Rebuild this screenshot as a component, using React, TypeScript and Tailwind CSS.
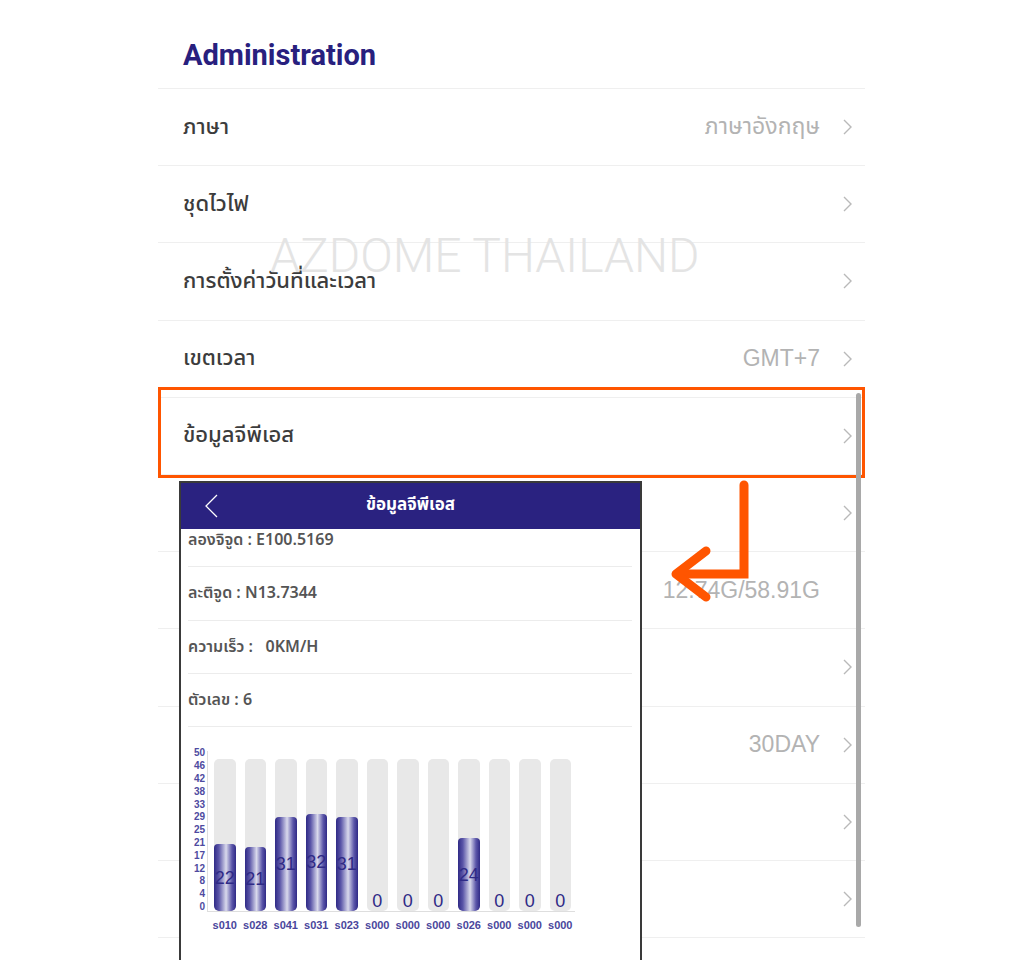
import React from "react";

const THAI = { fontFamily: '"Noto Sans Thai", "Noto Sans", "Liberation Sans", "DejaVu Sans", sans-serif' };
const LATIN = { fontFamily: '"Liberation Sans", Arial, sans-serif' };

type Row = { label: string; value?: string; chevron?: boolean };

const rows: Row[] = [
  { label: "ภาษา", value: "ภาษาอังกฤษ", chevron: true },
  { label: "ชุดไวไฟ", chevron: true },
  { label: "การตั้งค่าวันที่และเวลา", chevron: true },
  { label: "เขตเวลา", value: "GMT+7", chevron: true },
  { label: "ข้อมูลจีพีเอส", chevron: true },
  { label: "ฟอร์แมตการ์ด", chevron: true },
  { label: "พื้นที่จัดเก็บ", value: "12.74G/58.91G", chevron: false },
  { label: "เวอร์ชัน", chevron: true },
  { label: "ลบไฟล์อัตโนมัติ", value: "30DAY", chevron: true },
  { label: "รีเซ็ต", chevron: true },
  { label: "เกี่ยวกับ", chevron: true },
];

const satellites = [
  { id: "s010", snr: 22 },
  { id: "s028", snr: 21 },
  { id: "s041", snr: 31 },
  { id: "s031", snr: 32 },
  { id: "s023", snr: 31 },
  { id: "s000", snr: 0 },
  { id: "s000", snr: 0 },
  { id: "s000", snr: 0 },
  { id: "s026", snr: 24 },
  { id: "s000", snr: 0 },
  { id: "s000", snr: 0 },
  { id: "s000", snr: 0 },
];

const yTicks = ["50", "46", "42", "38", "33", "29", "25", "21", "17", "12", "8", "4", "0"];

const BAR_H = 152;

function Chevron({ hidden }: { hidden?: boolean }) {
  return (
    <svg
      width="9"
      height="16"
      viewBox="0 0 9 16"
      className={hidden ? "invisible" : ""}
    >
      <polyline points="1,1 8,8 1,15" fill="none" stroke="#b9b9b9" strokeWidth="1.4" />
    </svg>
  );
}

function SettingRow({ row }: { row: Row }) {
  const latinValue = row.value && /^[\x00-\x7f]+$/.test(row.value);
  return (
    <div className="flex h-[77.2px] items-center justify-between border-b border-[#efefef] pl-[25px] pr-[13px]">
      <span className="text-[22px] font-medium text-[#3c3c3c]" style={THAI}>
        {row.label}
      </span>
      <div className="flex items-center gap-[23px]">
        {row.value && (
          <span
            className="text-[23px] text-[#b3b3b3]"
            style={latinValue ? LATIN : THAI}
          >
            {row.value}
          </span>
        )}
        <Chevron hidden={!row.chevron} />
      </div>
    </div>
  );
}

function SignalChart() {
  return (
    <div className="flex pl-[7px] pt-[20px]">
      <div className="flex w-[17px] flex-col items-end">
        {yTicks.map((t) => (
          <div key={t} className="flex h-[12.8px] items-center">
            <span
              className="block text-[10px] font-bold leading-[10px] text-[#4e4aa0]"
              style={LATIN}
            >
              {t}
            </span>
          </div>
        ))}
      </div>
      <div className="ml-[2px] flex flex-col">
        <div className="mt-[4px] flex h-[161px] items-end gap-[9px] border-b border-l border-[#dedede] pl-[6px] pr-[4px]">
          {satellites.map((s, i) => {
            const fill = (s.snr / 50) * BAR_H;
            const mid = Math.max(fill / 2, 10);
            return (
              <div
                key={i}
                className="relative h-[152px] w-[21.5px] overflow-hidden rounded-[5px] bg-[#e8e8e8]"
              >
                <div
                  className="absolute bottom-0 left-0 right-0 rounded-[4px] bg-[linear-gradient(to_right,#2f2a86_0%,#5a55a8_22%,#d9d9ec_55%,#5a55a8_82%,#2f2a86_100%)]"
                  style={{ height: fill }}
                />
                <span
                  className="absolute left-1/2 -translate-x-1/2 translate-y-1/2 text-[18px] leading-none text-[#2f2a86]"
                  style={{ ...LATIN, bottom: mid }}
                >
                  {s.snr}
                </span>
              </div>
            );
          })}
        </div>
        <div className="mt-[7px] flex gap-[9px] pl-[7px]">
          {satellites.map((s, i) => (
            <div key={i} className="flex w-[21.5px] justify-center">
              <span
                className="whitespace-nowrap text-[11px] font-bold leading-[13px] text-[#4a469c]"
                style={LATIN}
              >
                {s.id}
              </span>
            </div>
          ))}
        </div>
      </div>
    </div>
  );
}

function GpsPanel() {
  const info = [
    "ลองจิจูด : E100.5169",
    "ละติจูด : N13.7344",
    "ความเร็ว :   0KM/H",
    "ตัวเลข : 6",
  ];
  return (
    <div className="absolute left-[179px] top-[481px] h-[500px] w-[463px] border-2 border-[#3a3a3a] bg-white">
      <div className="relative flex h-[46px] items-center justify-center bg-[#2a2280]">
        <svg
          width="14"
          height="24"
          viewBox="0 0 14 24"
          className="absolute left-[24px] top-[11px]"
        >
          <polyline points="12,1 1,12 12,23" fill="none" stroke="#ffffff" strokeWidth="1.3" />
        </svg>
        <span className="text-[17px] font-bold text-white" style={THAI}>
          ข้อมูลจีพีเอส
        </span>
      </div>
      <div className="h-[198px] overflow-hidden">
        <div className="-mt-[15px]">
          {info.map((line) => (
            <div
              key={line}
              className="ml-[7px] mr-[8px] flex h-[53.3px] items-center border-b border-[#ececec]"
            >
              <span
                className="whitespace-pre text-[16px] font-semibold text-[#555555]"
                style={THAI}
              >
                {line}
              </span>
            </div>
          ))}
        </div>
      </div>
      <SignalChart />
    </div>
  );
}

export default function App() {
  return (
    <div className="relative h-[960px] w-[1024px] overflow-hidden bg-white">
      <div className="ml-[158px] w-[707px]">
        <div className="h-[89px] border-b border-[#efefef] pl-[25px] pt-[39px]">
          <h1
            className="text-[29px] font-bold leading-[32px] text-[#28207e]"
            style={{ fontFamily: 'Roboto, "Liberation Sans", sans-serif' }}
          >
            Administration
          </h1>
        </div>
        {rows.map((r) => (
          <SettingRow key={r.label} row={r} />
        ))}
      </div>

      {/* watermark */}
      <div
        className="pointer-events-none absolute left-[270px] top-[228px] text-[48px] font-light leading-[56px] text-[#e4e4e4]"
        style={{ fontFamily: 'Roboto, "Liberation Sans", sans-serif' }}
      >
        AZDOME THAILAND
      </div>

      {/* highlight around the GPS row */}
      <div className="pointer-events-none absolute left-[158px] top-[387px] h-[91px] w-[707px] border-[3px] border-[#ff5500]" />

      {/* scroll indicator */}
      <div className="absolute left-[856px] top-[393px] h-[534px] w-[5px] rounded-full bg-[#a9a9a9]" />

      <GpsPanel />

      <svg
        className="pointer-events-none absolute left-0 top-0"
        width="1024"
        height="960"
        viewBox="0 0 1024 960"
      >
        <path
          d="M744 485 V574 H678"
          fill="none"
          stroke="#ff5500"
          strokeWidth="9"
          strokeLinecap="round"
          strokeLinejoin="miter"
        />
        <path
          d="M706 551 L676 574 L706 597"
          fill="none"
          stroke="#ff5500"
          strokeWidth="9"
          strokeLinecap="round"
          strokeLinejoin="round"
        />
      </svg>
    </div>
  );
}
